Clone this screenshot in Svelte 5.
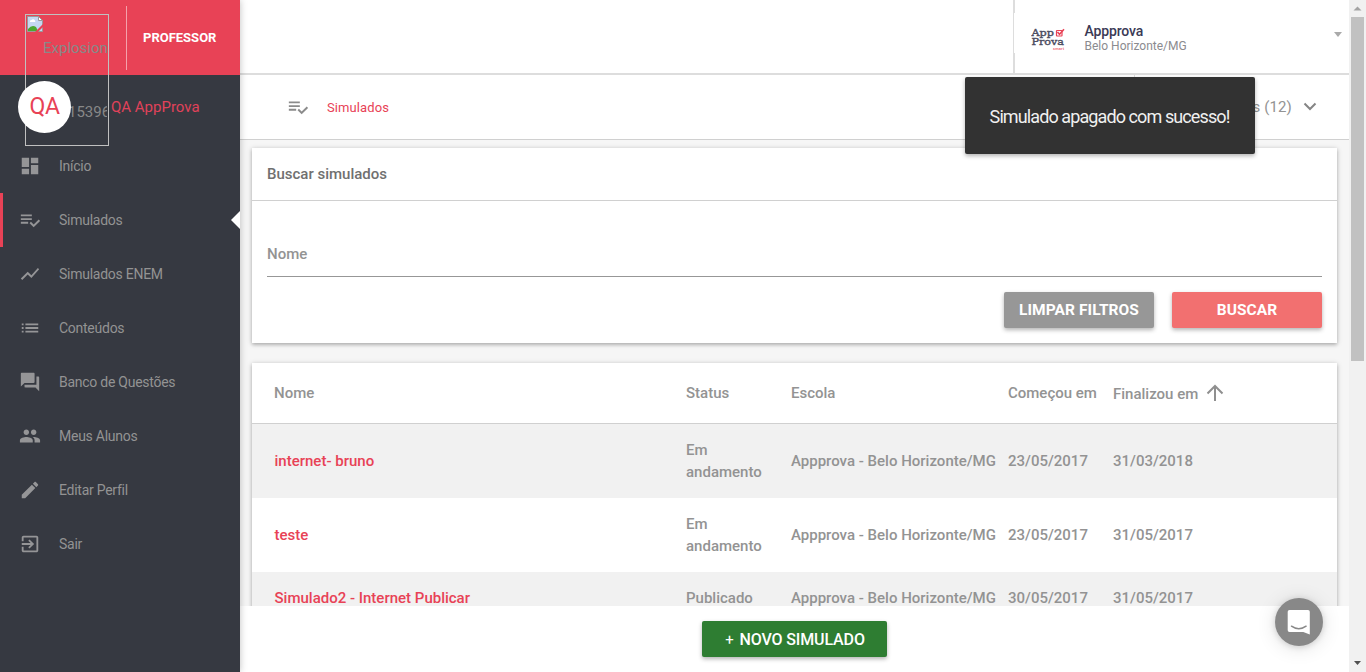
<script>
  const menu = [
    { label: 'Início', icon: 'M3 13h8V3H3v10zm0 8h8v-6H3v6zm10 0h8V11h-8v10zm0-18v6h8V3h-8z' },
    { label: 'Simulados', active: true, icon: 'check' },
    { label: 'Simulados ENEM', icon: 'M3.5 18.49l6-6.01 4 4L22 6.92l-1.41-1.41-7.09 7.97-4-4L2 16.99z' },
    { label: 'Conteúdos', icon: 'M3 13h2v-2H3v2zm0 4h2v-2H3v2zm0-8h2V7H3v2zm4 4h14v-2H7v2zm0 4h14v-2H7v2zM7 7v2h14V7H7z' },
    { label: 'Banco de Questões', icon: 'M21 6h-2v9H6v2c0 .55.45 1 1 1h11l4 4V7c0-.55-.45-1-1-1zm-4 6V3c0-.55-.45-1-1-1H3c-.55 0-1 .45-1 1v14l4-4h10c.55 0 1-.45 1-1z' },
    { label: 'Meus Alunos', icon: 'M16 11c1.66 0 2.99-1.34 2.99-3S17.66 5 16 5c-1.66 0-3 1.34-3 3s1.34 3 3 3zm-8 0c1.66 0 2.99-1.34 2.99-3S9.66 5 8 5C6.34 5 5 6.34 5 8s1.34 3 3 3zm0 2c-2.33 0-7 1.17-7 3.5V19h14v-2.500c0-2.330-4.670-3.500-7-3.500zm8 0c-.29 0-.62.02-.97.05 1.160.84 1.970 1.970 1.970 3.450V19h6v-2.500c0-2.330-4.670-3.500-7-3.500z' },
    { label: 'Editar Perfil', icon: 'M3 17.25V21h3.750L17.810 9.940l-3.750-3.750L3 17.250zM20.710 7.040c.39-.39.39-1.020 0-1.410l-2.340-2.340c-.39-.39-1.020-.39-1.410 0l-1.830 1.830 3.750 3.750 1.830-1.830z' },
    { label: 'Sair', icon: 'M10.090 15.590L11.500 17l5-5-5-5-1.410 1.410L12.670 11H3v2h9.670l-2.580 2.590zM19 3H5c-1.110 0-2 .9-2 2v4h2V5h14v14H5v-4H3v4c0 1.100.89 2 2 2h14c1.100 0 2-.9 2-2V5c0-1.100-.9-2-2-2z' }
  ];
  const check = 'M14 10H2v2h12v-2zm0-4H2v2h12V6zM2 16h8v-2H2v2zm19.500-4.500L23 13l-6.990 7-4.510-4.500L13 14l3.010 3 5.490-5.500z';
  const rows = [
    ['internet- bruno', 'Em andamento', 'Appprova - Belo Horizonte/MG', '23/05/2017', '31/03/2018'],
    ['teste', 'Em andamento', 'Appprova - Belo Horizonte/MG', '23/05/2017', '31/05/2017'],
    ['Simulado2 - Internet Publicar', 'Publicado', 'Appprova - Belo Horizonte/MG', '30/05/2017', '31/05/2017']
  ];
</script>

<div class="page">
  <aside>
    <div class="brand"><span class="role">PROFESSOR</span></div>
    <div class="user"><span class="username">QA AppProva</span></div>
    <nav>
      {#each menu as item}
        <a class:active={item.active} href="#top">
          <svg width="22" height="22" viewBox="0 0 24 24"><path d={item.icon === 'check' ? check : item.icon} /></svg>
          <span>{item.label}</span>
          {#if item.active}<i></i>{/if}
        </a>
      {/each}
    </nav>
    <div class="broken">
      <svg class="pic" width="16" height="16" viewBox="0 0 16 16">
        <path d="M.5.500h11l4 4v11H.5z" fill="#c5d7f2" stroke="#9a9a9a" />
        <path d="M11.500.500v4h4z" fill="#fff" stroke="#9a9a9a" />
        <path d="M3 6a1.500 1.500 0 0 1 1.500-2A2 2 0 0 1 8 4.500 1 1 0 0 1 8 6z" fill="#fff" />
        <path d="M1 15v-2q4-5 8-2l2 4z" fill="#4ba830" />
        <path d="M8 16l8-8v3l-5 5z" fill="#e84256" />
      </svg>
      <div class="alt">Explosion</div>
      <div class="alt second">15396</div>
    </div>
    <div class="avatar">QA</div>
  </aside>

  <main>
    <header>
      <div class="account">
        <svg class="logo" width="34" height="26" viewBox="0 0 34 26">
          <g font-family="DejaVu Serif, serif" fill="#4b4c60" stroke="#4b4c60" stroke-width=".4">
            <text x=".5" y="11" font-size="10" textLength="22.500" lengthAdjust="spacingAndGlyphs">App</text>
            <text x=".5" y="20" font-size="10" textLength="32.500" lengthAdjust="spacingAndGlyphs">Prova</text>
          </g>
          <rect x="25.500" y="5.500" width="5.500" height="5.500" rx=".5" fill="none" stroke="#e84256" stroke-width="1.200" />
          <path d="M26.500 7l2 2.300 4.500-5" fill="none" stroke="#e84256" stroke-width="1.600" />
          <text x="22" y="24.500" font-size="4" font-family="Roboto, sans-serif" font-weight="700" fill="#ef7480" textLength="11">smart</text>
        </svg>
        <div class="school"><strong>Appprova</strong><span>Belo Horizonte/MG</span></div>
        <b class="caret"></b>
      </div>
    </header>

    <div class="crumb">
      <svg width="22" height="22" viewBox="0 0 24 24"><path d={check} /></svg>
      <span class="title">Simulados</span>
      <div class="filter">
        <span>s (12)</span>
        <svg class="chev" width="14" height="9" viewBox="0 0 14 9"><path d="M1.500 1.500L7 7l5.500-5.500" /></svg>
      </div>
    </div>

    <div class="content">
      <section class="card search">
        <h2>Buscar simulados</h2>
        <div class="body">
          <div class="field">Nome</div>
          <div class="buttons">
            <button class="clear">LIMPAR FILTROS</button>
            <button class="go">BUSCAR</button>
          </div>
        </div>
      </section>

      <section class="card table">
        <div class="row head">
          <span>Nome</span><span>Status</span><span>Escola</span><span>Começou em</span>
          <span class="sorted">Finalizou em<svg width="18" height="18" viewBox="0 0 18 18"><path d="M9 17V2M1.500 9.500L9 2l7.500 7.500" /></svg></span>
        </div>
        {#each rows as row, r}
          <div class="row" class:odd={r % 2 === 0} class:short={r === 2}>
            {#each row as cell, c}<span class:name={c === 0}>{cell}</span>{/each}
          </div>
        {/each}
      </section>
    </div>

    <footer><button class="new"><em>+</em> NOVO SIMULADO</button></footer>
  </main>

  <div class="scroll">
    <svg width="17" height="17"><path d="M4.500 10.500h8l-4-4z" fill="#a3a3a3" /></svg>
    <div class="thumb"></div>
    <svg class="down" width="17" height="17"><path d="M5 6h7l-3.500 4z" fill="#505050" /></svg>
  </div>

  <div class="toast">Simulado apagado com sucesso!</div>
  <div class="chat">
    <svg width="24" height="26" viewBox="0 0 24 26">
      <path d="M2.500 1h18.500a1.800 1.800 0 0 1 1.800 1.800V25.500l-6.500-2.400H2.500A1.800 1.800 0 0 1 .7 21.300V2.800A1.800 1.800 0 0 1 2.500 1z" fill="#fff" />
      <path d="M4.500 17.200q7.300 5.200 14.600 0" fill="none" stroke="#888" stroke-width="1.500" stroke-linecap="round" />
    </svg>
  </div>
</div>

<style>
  :global(body) { overflow: hidden; }
  .page { position: relative; display: flex; width: 1366px; height: 672px; overflow: hidden; background: #f6f6f6; font-family: Roboto, sans-serif; color: #939393; }
  * { box-sizing: border-box; }
  button { font-family: inherit; border: 0; padding: 0; color: #fff; }

  aside { position: relative; z-index: 2; width: 240px; background: #363941; box-shadow: 0 0 7px rgba(0, 0, 0, .25); }
  .brand { display: flex; align-items: center; height: 75px; padding-left: 126px; background: #e84256; }
  .role { display: flex; align-items: center; height: 64px; padding-left: 16px; border-left: 1px solid rgba(255, 255, 255, .5); color: #fff; font-size: 13px; font-weight: 700; letter-spacing: 0; }
  .user { display: flex; align-items: center; height: 64px; padding-left: 111px; }
  .username { color: #e0425a; font-size: 15px; }
  nav a { position: relative; display: flex; align-items: center; height: 54px; padding-left: 19px; border-left: 0 solid #e84256; color: #939393; font-size: 14px; letter-spacing: -.26px; text-decoration: none; }
  nav a.active { border-left-width: 3px; padding-left: 16px; }
  nav svg { margin-right: 18px; fill: #959597; }
  nav i { position: absolute; right: 0; top: 18px; border: solid transparent; border-width: 9px 9px 9px 0; border-right-color: #fff; }
  .broken { position: absolute; left: 25px; top: 14px; width: 84px; height: 132px; border: 1px solid silver; overflow: hidden; }
  .pic { position: absolute; left: 1px; top: 1px; }
  .alt { position: absolute; left: 17px; top: 1px; width: 64px; line-height: 64px; color: #888; font-size: 15px; overflow: hidden; white-space: nowrap; }
  .alt.second { left: 42px; top: 65px; width: 39px; }
  .avatar { position: absolute; left: 18px; top: 80.500px; width: 53px; height: 52px; border-radius: 50%; background: #fff; color: #e84256; font-size: 23px; letter-spacing: -.3px; line-height: 52px; text-align: center; }

  main { display: flex; flex-direction: column; width: 1109px; height: 672px; }
  header { display: flex; justify-content: flex-end; flex: 0 0 75px; border-bottom: 2px solid #ddd; background: #fff; }
  .account { position: relative; display: flex; align-items: center; width: 336px; padding: 2px 7px 0 16px; border-left: 2px solid #ddd; }
  .account::before { content: ''; position: absolute; left: -1px; top: 13px; width: 1px; height: 40px; background: #fff; }
  .school { display: flex; flex-direction: column; margin: 1px auto 0 19.500px; font-size: 12px; line-height: 15px; color: #8b8b8f; }
  .school strong { color: #3a3a56; font-size: 14px; font-weight: 500; line-height: 16px; letter-spacing: -.15px; }
  .caret { margin-top: -6px; border: solid transparent; border-width: 5px 4px 0; border-top-color: #aaa; }
  .crumb { display: flex; align-items: center; flex: 0 0 65px; padding-left: 47px; border-bottom: 1px solid #d0d0d0; background: #fff; }
  .crumb svg { fill: #8b8b8b; }
  .title { margin: 1px auto 0 18px; color: #e84256; font-size: 13px; letter-spacing: .1px; }
  .filter { display: flex; align-items: center; justify-content: flex-end; width: 215px; height: 64px; padding-right: 32px; border-left: 1px solid #ddd; font-size: 15px; }
  .filter span { letter-spacing: .15px; }
  .crumb .chev { margin: -2px 0 0 11px; fill: none; stroke: #858585; stroke-width: 2; }

  .content { flex: 1; min-height: 0; padding: 8px 12px 0; overflow: hidden; }
  .card { background: #fff; box-shadow: 0 1px 5px rgba(0, 0, 0, .25), 0 2px 3px rgba(0, 0, 0, .12); }
  .search { height: 195px; margin-bottom: 20px; }
  h2 { margin: 0; height: 53px; padding: 0 15px; border-bottom: 1px solid #d0d0d0; color: #707070; font-size: 15px; font-weight: 500; line-height: 52px; }
  .body { padding: 30px 15px 0; }
  .field { height: 46px; border-bottom: 1px solid #979797; font-size: 15px; font-weight: 500; line-height: 47px; }
  .buttons { display: flex; justify-content: flex-end; gap: 18px; padding-top: 15px; }
  .buttons button { width: 150px; height: 36px; border-radius: 2px; font-size: 15.500px; font-weight: 700; letter-spacing: .08px; box-shadow: 0 2px 4px rgba(0, 0, 0, .3); }
  .buttons .clear { background: #979797; }
  .buttons .go { background: #f27070; }
  .row { display: grid; grid-template-columns: 412px 105px 217px 105px 1fr; align-items: center; height: 74px; padding-left: 22px; font-size: 15px; font-weight: 500; line-height: 22px; }
  .row span:nth-child(2) { padding-right: 20px; }
  .row.head { height: 61px; border-bottom: 1px solid #d0d0d0; }
  .row.odd { background: #f1f1f1; }
  .row.short { height: 52px; }
  .name { padding-left: .5px; color: #e84256; }
  .sorted { display: flex; align-items: center; padding-top: 1px; }
  .sorted svg { margin: -1px 0 0 7.500px; fill: none; stroke: #8f8f8f; stroke-width: 2; }
  footer { display: flex; justify-content: center; flex: 0 0 66px; padding-top: 15px; background: #fff; }
  .new { width: 185px; height: 36px; padding-left: 1px; border-radius: 2px; background: #2e7d32; font-size: 16px; font-weight: 500; letter-spacing: -.12px; line-height: 37px; box-shadow: 0 2px 4px rgba(0, 0, 0, .3); }
  .new em { margin-right: 2px; font-style: normal; font-weight: 400; font-size: 15px; }

  .scroll { display: flex; flex-direction: column; width: 17px; background: #f1f1f1; }
  .scroll svg { display: block; }
  .thumb { width: 13px; height: 344px; margin-left: 2px; background: #c1c1c1; }
  .scroll .down { margin-top: auto; }
  .toast { position: absolute; z-index: 3; left: 965px; top: 77px; width: 290px; height: 77px; padding-right: 1px; border-radius: 2px; background: #323232; color: #f0f0f0; font-size: 18px; font-weight: 400; letter-spacing: -.9px; line-height: 79px; text-align: center; box-shadow: 0 2px 4px rgba(0, 0, 0, .3); }
  .chat { position: absolute; z-index: 3; left: 1275px; top: 598px; display: flex; align-items: center; justify-content: center; width: 48px; height: 48px; border-radius: 50%; background: #888; box-shadow: 0 1px 6px rgba(0, 0, 0, .15), 0 2px 20px rgba(0, 0, 0, .12); }
</style>
